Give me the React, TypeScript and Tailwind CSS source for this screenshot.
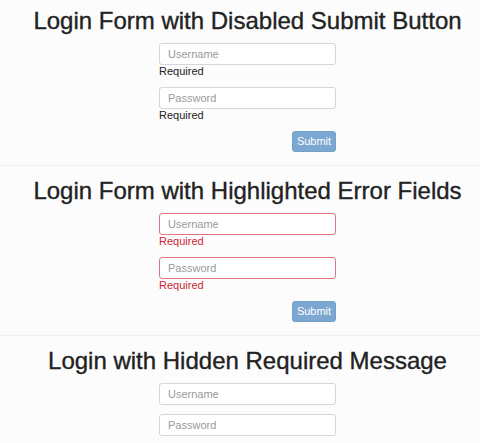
import React from "react";

function Field({ placeholder, error, note }: { placeholder: string; error?: boolean; note?: boolean }) {
    return (
        <div>
            <input
                placeholder={placeholder}
                className={
                    "block w-full h-[22px] rounded-[3px] bg-white px-[8px] text-[11px] text-[#333] placeholder:text-[#9a9a9a] outline-none border " +
                    (error ? "border-[#e07480]" : "border-[#d6d6da]")
                }
            />
            {note && (
                <p className={"text-[11px] leading-[12px] " + (error ? "text-[#cc1f33]" : "text-[#222]")}>Required</p>
            )}
        </div>
    );
}

function SubmitButton() {
    return (
        <div className="flex justify-end mt-[10px]">
            <button className="w-[44px] h-[21px] rounded-[3px] bg-[#7ba7d0] border border-[#72a0c9] text-white text-[11px] leading-none">
                Submit
            </button>
        </div>
    );
}

function Title({ children }: { children: React.ReactNode }) {
    return (
        <h1 className="text-center text-[24px] leading-[28px] text-[#222] [-webkit-text-stroke:0.35px_#222]">{children}</h1>
    );
}

export default function App() {
    return (
        <div className="min-h-screen bg-[#fcfcfd] font-['Liberation_Sans',Arial,sans-serif]">
            <section className="pt-[7px] pb-[13px] pl-[15px] border-b border-[#efeff2]">
                <Title>Login Form with Disabled Submit Button</Title>
                <form className="w-[177px] mx-auto mt-[8px] flex flex-col gap-[10px]">
                    <Field placeholder="Username" note />
                    <Field placeholder="Password" note />
                </form>
                <div className="w-[177px] mx-auto">
                    <SubmitButton />
                </div>
            </section>
            <section className="pt-[11px] pb-[13px] pl-[15px] border-b border-[#efeff2]">
                <Title>Login Form with Highlighted Error Fields</Title>
                <form className="w-[177px] mx-auto mt-[8px] flex flex-col gap-[10px]">
                    <Field placeholder="Username" note error />
                    <Field placeholder="Password" note error />
                </form>
                <div className="w-[177px] mx-auto">
                    <SubmitButton />
                </div>
            </section>
            <section className="pt-[11px] pl-[15px]">
                <Title>Login with Hidden Required Message</Title>
                <form className="w-[177px] mx-auto mt-[8px] flex flex-col gap-[9px]">
                    <Field placeholder="Username" />
                    <Field placeholder="Password" />
                </form>
            </section>
        </div>
    );
}
